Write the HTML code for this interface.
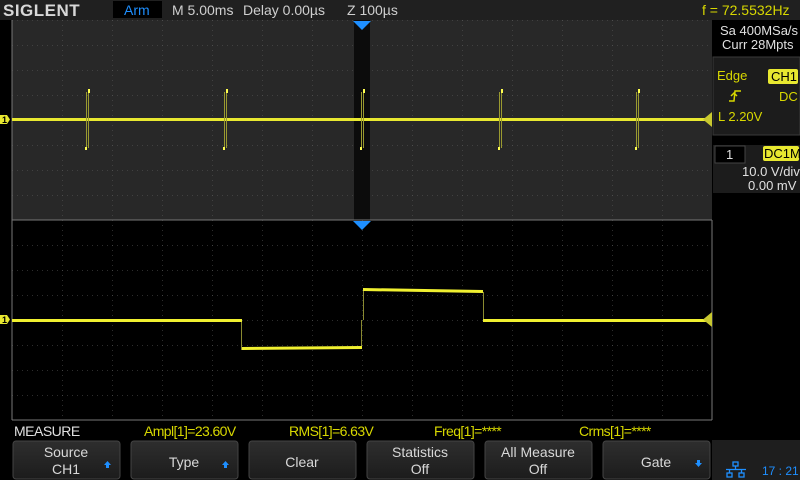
<!DOCTYPE html>
<html><head><meta charset="utf-8"><style>
body{margin:0;width:800px;height:480px;background:#000;overflow:hidden;font-family:"Liberation Sans",sans-serif}
svg{position:absolute;left:0;top:0}
</style></head><body>
<svg width="800" height="480" viewBox="0 0 800 480" font-family="Liberation Sans, sans-serif">
<defs>
<pattern id="g" x="12" y="20" width="50" height="25" patternUnits="userSpaceOnUse">
<line x1="0" y1="0" x2="0" y2="25" stroke="#5a5a5a" stroke-dasharray="1 4"/>
<line x1="0" y1="0" x2="50" y2="0" stroke="#5a5a5a" stroke-dasharray="1 4"/>
</pattern>
<linearGradient id="bt" x1="0" y1="0" x2="0" y2="1"><stop offset="0" stop-color="#2e2e2e"/><stop offset="1" stop-color="#1c1c1c"/></linearGradient>
</defs>
<rect x="0" y="0" width="800" height="20" fill="#202020"/>
<text x="3" y="16" font-size="17" font-weight="bold" fill="#d8d8d8" letter-spacing="0.5">SIGLENT</text>
<rect x="113" y="1" width="49" height="17" fill="#000"/>
<text x="124" y="15" font-size="14" fill="#1e8fff">Arm</text>
<text x="172" y="15" font-size="14" fill="#cfcfcf">M 5.00ms</text>
<text x="243" y="15" font-size="14" fill="#cfcfcf">Delay 0.00µs</text>
<text x="347" y="15" font-size="14" fill="#cfcfcf">Z 100µs</text>
<text x="702" y="15" font-size="14" fill="#d8d800">f = 72.5532Hz</text>
<rect x="12" y="20" width="700" height="200" fill="#282828"/>
<rect x="12" y="20" width="700" height="200" fill="url(#g)"/>
<rect x="354" y="20" width="16" height="200" fill="#0c0c0c"/>
<line x1="12" y1="20" x2="12" y2="220" stroke="#777"/>
<polygon points="353,21 371,21 362,30" fill="#1e8fff"/>
<rect x="12" y="118" width="700" height="3" fill="#e8e830"/>
<g stroke="#9a9a30" stroke-width="1">
<line x1="86.5" y1="92" x2="86.5" y2="150"/><line x1="88.5" y1="92" x2="88.5" y2="148"/>
<line x1="224.5" y1="92" x2="224.5" y2="150"/><line x1="226.5" y1="92" x2="226.5" y2="148"/>
<line x1="361.5" y1="92" x2="361.5" y2="150"/><line x1="363.5" y1="92" x2="363.5" y2="148"/>
<line x1="499.5" y1="92" x2="499.5" y2="150"/><line x1="501.5" y1="92" x2="501.5" y2="148"/>
<line x1="636.5" y1="92" x2="636.5" y2="150"/><line x1="638.5" y1="92" x2="638.5" y2="148"/>
</g>
<g fill="#ffff50">
<rect x="88" y="89" width="2" height="4"/><rect x="85" y="147" width="2" height="3"/>
<rect x="226" y="89" width="2" height="4"/><rect x="223" y="147" width="2" height="3"/>
<rect x="363" y="89" width="2" height="4"/><rect x="360" y="147" width="2" height="3"/>
<rect x="501" y="89" width="2" height="4"/><rect x="498" y="147" width="2" height="3"/>
<rect x="638" y="89" width="2" height="4"/><rect x="635" y="147" width="2" height="3"/>
</g>
<polygon points="0,115 7,115 10,119.5 7,124 0,124" fill="#e8e830"/>
<text x="2" y="123" font-size="9" font-weight="bold" fill="#000">1</text>
<polygon points="712,112 703,119.5 712,127" fill="#c8c830"/>
<rect x="12" y="220" width="700" height="200" fill="#000"/>
<rect x="12" y="220" width="700" height="200" fill="url(#g)"/>
<line x1="12" y1="220" x2="712" y2="220" stroke="#777"/>
<line x1="12" y1="220" x2="12" y2="420" stroke="#777"/>
<line x1="712" y1="220" x2="712" y2="420" stroke="#777"/>
<line x1="12" y1="420" x2="712" y2="420" stroke="#777"/>
<polygon points="353,221 371,221 362,230" fill="#1e8fff"/>
<g stroke="#8a8a30" stroke-width="1">
<line x1="241.5" y1="320" x2="241.5" y2="350"/><line x1="361.5" y1="348" x2="361.5" y2="320"/><line x1="363.5" y1="320" x2="363.5" y2="290"/><line x1="483.5" y1="292" x2="483.5" y2="320"/>
</g>
<g fill="#f0f030">
<rect x="12" y="319" width="230" height="3"/>
<polygon points="242,347 362,346 362,349 242,350"/>
<polygon points="363,288 483,290 483,293 363,291"/>
<rect x="483" y="319" width="229" height="3"/>
</g>
<polygon points="0,315 7,315 10,319.5 7,324 0,324" fill="#e8e830"/>
<text x="2" y="323" font-size="9" font-weight="bold" fill="#000">1</text>
<polygon points="712,312 703,319.5 712,327" fill="#c8c830"/>
<rect x="713" y="20" width="87" height="36" fill="#000"/>
<text x="720" y="35" font-size="13" fill="#e0e0e0">Sa 400MSa/s</text>
<text x="722" y="49" font-size="13" fill="#e0e0e0">Curr 28Mpts</text>
<rect x="713" y="57" width="87" height="78" fill="#1c1c1c" stroke="#3a3a3a"/>
<text x="717" y="80" font-size="13" fill="#d8d800">Edge</text>
<rect x="768" y="69" width="30" height="15" rx="2" fill="#e8e830"/>
<text x="771" y="81" font-size="13" fill="#000">CH1</text>
<path d="M729,101 L734,101 L735,91 L741,91 M731,96 L734,93 L737,96" stroke="#d8d800" stroke-width="1.5" fill="none"/>
<text x="779" y="101" font-size="13" fill="#d8d800">DC</text>
<text x="718" y="121" font-size="13" fill="#d8d800">L  2.20V</text>
<rect x="713" y="145" width="87" height="48" fill="#1c1c1c"/>
<rect x="715" y="146" width="30" height="17" fill="#000" stroke="#444"/>
<text x="726" y="159" font-size="13" fill="#e0e0e0">1</text>
<rect x="763" y="146" width="36" height="15" rx="2" fill="#e8e830"/>
<text x="764" y="158" font-size="13" fill="#000">DC1M</text>
<text x="742" y="176" font-size="13" fill="#e0e0e0">10.0 V/div</text>
<text x="748" y="190" font-size="13" fill="#e0e0e0">0.00 mV</text>
<text x="14" y="436" font-size="14" fill="#e0e0e0" letter-spacing="-0.5">MEASURE</text>
<text x="144" y="436" font-size="14" fill="#d8d800" letter-spacing="-0.6">Ampl[1]=23.60V</text>
<text x="289" y="436" font-size="14" fill="#d8d800" letter-spacing="-0.6">RMS[1]=6.63V</text>
<text x="434" y="436" font-size="14" fill="#d8d800" letter-spacing="-0.6">Freq[1]=****</text>
<text x="579" y="436" font-size="14" fill="#d8d800" letter-spacing="-0.6">Crms[1]=****</text>
<g font-size="14" fill="#d8d8d8" text-anchor="middle">
<rect x="13" y="441" width="107" height="38" rx="3" fill="url(#bt)" stroke="#444"/>
<text x="66" y="457">Source</text><text x="66" y="474">CH1</text>
<rect x="131" y="441" width="107" height="38" rx="3" fill="url(#bt)" stroke="#444"/>
<text x="184" y="467">Type</text>
<rect x="249" y="441" width="107" height="38" rx="3" fill="url(#bt)" stroke="#444"/>
<text x="302" y="467">Clear</text>
<rect x="367" y="441" width="107" height="38" rx="3" fill="url(#bt)" stroke="#444"/>
<text x="420" y="457">Statistics</text><text x="420" y="474">Off</text>
<rect x="485" y="441" width="107" height="38" rx="3" fill="url(#bt)" stroke="#444"/>
<text x="538" y="457">All Measure</text><text x="538" y="474">Off</text>
<rect x="603" y="441" width="107" height="38" rx="3" fill="url(#bt)" stroke="#444"/>
<text x="656" y="467">Gate</text>
</g>
<polygon points="104,465 111,465 107.5,461" fill="#1e8fff"/><rect x="106" y="465" width="3" height="3" fill="#1e8fff"/>
<polygon points="222,465 229,465 225.5,461" fill="#1e8fff"/><rect x="224" y="465" width="3" height="3" fill="#1e8fff"/>
<polygon points="695,463 702,463 698.5,467" fill="#1e8fff"/><rect x="697" y="460" width="3" height="3" fill="#1e8fff"/>
<rect x="712" y="440" width="88" height="40" fill="#1e1e1e"/>
<g stroke="#1e8fff" fill="none" stroke-width="1.3">
<rect x="733" y="462" width="5" height="4"/><rect x="727" y="473" width="5" height="4"/><rect x="739" y="473" width="5" height="4"/>
<path d="M735.5,466 V469 M726,469.5 H746 M729.5,469.5 V473 M741.5,469.5 V473"/>
</g>
<text x="762" y="475" font-size="12" fill="#1e8fff">17 : 21</text>
</svg>
</body></html>
